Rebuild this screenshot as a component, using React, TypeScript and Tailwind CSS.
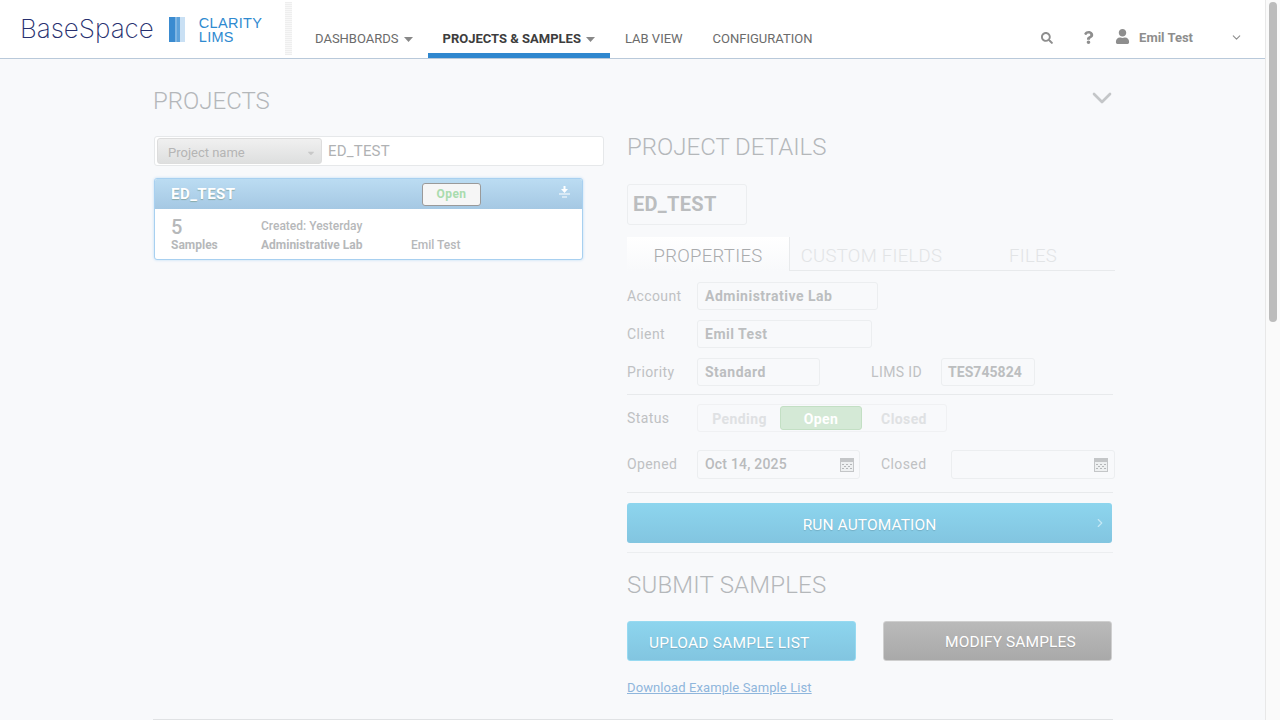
import React from "react";
import { FaSearch, FaQuestion, FaUser, FaCaretDown } from "react-icons/fa";
import { ChevronDown, ChevronRight } from "lucide-react";

const din = "font-['Roboto',sans-serif]";

const Caret = () => (
  <svg width="9" height="5" viewBox="0 0 9 5" className="text-[#888]">
    <path d="M0 0h9L4.5 5z" fill="currentColor" />
  </svg>
);

const NavItem = ({ label, active, caret }: { label: string; active?: boolean; caret?: boolean }) => (
  <div
    className={`flex h-[58px] items-center gap-[5px] px-[15px] pt-[25px] text-[13px] ${
      active ? "border-b-[5px] border-[#2f87cf] font-bold text-[#3d3d3d]" : "pb-[5px] text-[#6b6b6b]"
    }`}
  >
    {label}
    {caret && <Caret />}
  </div>
);

const CalendarIcon = () => (
  <svg width="14" height="14" viewBox="0 0 14 14">
    <rect width="14" height="14" fill="#c4c6c8" />
    <rect x="1" y="4" width="12" height="9" fill="#eef0f1" />
    <path d="M2 6h2v1H2zM6 6h2v1H6zM10 6h2v1h-2zM4 8h2v1H4zM8 8h2v1H8zM2 10h2v1H2zM6 10h2v1H6zM10 10h2v1h-2z" fill="#b5b7b9" />
  </svg>
);

const Field = ({ value, width, tight }: { value: string; width: string; tight?: boolean }) => (
  <div
    className={`flex h-[28px] items-center rounded-[3px] border border-[#eceef0] text-[14px] font-bold text-[#bcbec0] ${width} ${
      tight ? "pl-[6px] tracking-[0.05px]" : "pl-[7px] tracking-[0.5px]"
    }`}
  >
    {value}
  </div>
);

const Label = ({ children, width }: { children: React.ReactNode; width: string }) => (
  <div className={`shrink-0 text-[14px] tracking-[0.4px] text-[#bfc1c3] ${width}`}>{children}</div>
);

export default function App() {
  return (
    <div className={`flex h-[720px] w-[1280px] overflow-hidden bg-[#f8f9fb] ${din}`}>
      <div className="w-[1265px]">
        <header className="flex h-[59px] border-b border-[#b9c9da] bg-white">
          <div className="flex w-[300px] items-start">
            <div className="mt-[14px] ml-[20px] font-['Inter',sans-serif] text-[26px] leading-[30px] font-extralight text-[#27306f]">
              BaseSpace
            </div>
            <div className="mt-[17px] ml-[15px] flex h-[25px] w-[16px]">
              <div className="w-[6px] bg-[#3a8bd0]" />
              <div className="w-[2px] bg-[#7fb5e3]" />
              <div className="w-[3px] bg-[#5ea2da]" />
              <div className="w-[5px] bg-[#c9e0f4]" />
            </div>
            <div className="mt-[16px] ml-[14px] font-['Liberation_Sans',sans-serif] text-[14.5px] leading-[14px] tracking-[0.3px] text-[#2f8ad0]">
              CLARITY
              <br />
              LIMS
            </div>
            <div className="mt-[2px] mr-[8px] ml-auto h-[53px] w-[7px] bg-[repeating-linear-gradient(to_bottom,#eeeeee_0px,#eeeeee_1px,#f8f8f8_1px,#f8f8f8_2px)]" />
          </div>
          <nav className="flex">
            <NavItem label="DASHBOARDS" caret />
            <NavItem label="PROJECTS & SAMPLES" caret active />
            <NavItem label="LAB VIEW" />
            <NavItem label="CONFIGURATION" />
          </nav>
          <div className="ml-auto flex items-center pt-[17px] text-[#8e8e8e]">
            <FaSearch size={12} />
            <FaQuestion size={13} className="ml-[29px]" />
            <FaUser size={15} className="ml-[20px] -translate-y-[1px]" />
            <span className="ml-[9px] text-[13px] font-bold">Emil Test</span>
            <ChevronDown size={13} className="mr-[22px] ml-[37px]" />
          </div>
        </header>

        <main className="ml-[153px] w-[960px]">
          <div className="flex h-[77px] items-start justify-between">
            <h1 className="mt-[27px] text-[24px] leading-[30px] font-light text-[#b4b7ba]">PROJECTS</h1>
            <ChevronDown size={32} strokeWidth={2} className="mt-[23px] -mr-[5px] text-[#c4c6c8]" />
          </div>

          <div className="flex">
            <div className="w-[474px] pl-[1px]">
              <div className="flex h-[30px] w-[450px] items-center rounded-[3px] border border-[#e6e8ea] bg-white pl-[2px]">
                <div className="flex h-[26px] w-[165px] items-center justify-between rounded-[3px] border border-[#dddddd] bg-linear-to-b from-[#f0f0f0] to-[#dedfdf] pt-[3px] pr-[5px] pl-[10px] text-[13px] text-[#b5b5b5]">
                  Project name
                  <FaCaretDown size={10} className="text-[#c8c8c8]" />
                </div>
                <span className="ml-[6px] text-[15px] tracking-[0.2px] text-[#b0b2b4]">ED_TEST</span>
              </div>

              <div className="mt-[12px] h-[82px] w-[429px] overflow-hidden rounded-[3px] border border-[#a8d0f0] bg-white shadow-[0_0_3px_#bcdcf5]">
                <div className="flex h-[30px] items-center bg-linear-to-b from-[#bbdcf2] to-[#a5c8e3] pr-[12px] pl-[16px]">
                  <span className="w-[250px] text-[15px] font-bold tracking-[0.5px] text-white [text-shadow:0_1px_1px_#8aa]">ED_TEST</span>
                  <span className="ml-[1px] flex h-[23px] w-[59px] items-center justify-center rounded-[3px] border border-[#9a9a9a] bg-[#f6f6f6] text-[12px] font-bold tracking-[0.4px] text-[#a9dcae]">
                    Open
                  </span>
                  <svg width="11" height="12" viewBox="0 0 11 12" className="mb-[5px] ml-auto">
                    <path d="M4.5 0h2v3H9L5.5 7 2 3h2.5zM0 7.5h11v1H0zM3 10.5h5v1H3z" fill="#fff" />
                  </svg>
                </div>
                <div className="flex pt-[7px] pl-[16px] text-[#b6b8ba]">
                  <div className="w-[90px]">
                    <div className="text-[20px] leading-[22px] font-medium">5</div>
                    <div className="text-[12px] leading-[14px] font-bold">Samples</div>
                  </div>
                  <div className="w-[150px] pt-[3px] text-[12px] leading-[14px]">
                    <div className="font-medium">Created: Yesterday</div>
                    <div className="mt-[5px] font-bold">Administrative Lab</div>
                  </div>
                  <div className="pt-[22px] text-[12px] leading-[14px] font-medium">Emil Test</div>
                </div>
              </div>
            </div>

            <div className="-mt-[5px] w-[486px]">
              <h2 className="text-[24px] leading-[32px] font-light text-[#b4b7ba]">PROJECT DETAILS</h2>
              <div className="mt-[21px] flex h-[41px] w-[120px] items-center rounded-[3px] border border-[#eceef0] pb-[1px] pl-[5px] text-[20px] font-bold tracking-[0.3px] text-[#bbbdbf]">
                ED_TEST
              </div>

              <div className="mt-[12px] flex h-[34px] w-[488px] border-b border-[#e8eaec] text-[18.5px] font-light tracking-[0.3px]">
                <div className="flex h-[34px] w-[163px] items-center justify-center border-r border-[#e8eaec] bg-linear-to-b from-white to-[#f8f9fb] pt-[6px] text-[#a9abad]">
                  PROPERTIES
                </div>
                <div className="flex w-[163px] items-center justify-center pt-[6px] text-[#e2e4e6]">CUSTOM FIELDS</div>
                <div className="flex w-[160px] items-center justify-center pt-[6px] text-[#e2e4e6]">FILES</div>
              </div>

              <div className="mt-[11px] flex items-center">
                <Label width="w-[70px]">Account</Label>
                <Field value="Administrative Lab" width="w-[181px]" />
              </div>
              <div className="mt-[10px] flex items-center">
                <Label width="w-[70px]">Client</Label>
                <Field value="Emil Test" width="w-[175px]" />
              </div>
              <div className="mt-[10px] flex items-center">
                <Label width="w-[70px]">Priority</Label>
                <Field value="Standard" width="w-[123px]" />
                <Label width="w-[70px] ml-[51px]">LIMS ID</Label>
                <Field value="TES745824" width="w-[94px]" tight />
              </div>

              <div className="mt-[8px] border-t border-[#e8eaec]" />

              <div className="mt-[9px] flex items-center">
                <Label width="w-[70px]">Status</Label>
                <div className="flex h-[28px] w-[250px] items-center rounded-[3px] border border-[#f0f1f3] pl-[1px] text-[14px] font-bold tracking-[0.4px] text-[#dfe1e3]">
                  <span className="w-[81px] pt-[2px] text-center">Pending</span>
                  <span className="flex h-[24px] w-[82px] items-center justify-center rounded-[3px] border border-[#c3dfc4] bg-[#d4e9d6] pt-[2px] text-white">Open</span>
                  <span className="w-[84px] pt-[2px] text-center">Closed</span>
                </div>
              </div>

              <div className="mt-[18px] flex w-[490px] items-center">
                <Label width="w-[70px]">Opened</Label>
                <div className="flex h-[29px] w-[163px] items-center justify-between rounded-[3px] border border-[#eceef0] pr-[5px] pl-[7px] text-[14px] font-medium tracking-[0.2px] text-[#b9bbbd]">
                  Oct 14, 2025
                  <CalendarIcon />
                </div>
                <Label width="w-[70px] ml-[21px]">Closed</Label>
                <div className="flex h-[29px] w-[164px] items-center justify-end rounded-[3px] border border-[#eceef0] pr-[6px]">
                  <CalendarIcon />
                </div>
              </div>

              <div className="mt-[13px] border-t border-[#e8eaec]" />

              <div className="relative mt-[10px] flex h-[40px] w-[485px] items-center justify-center rounded-[3px] bg-linear-to-b from-[#8dd5ee] to-[#82c5e0] pt-[5px] text-[15.5px] tracking-[0.1px] text-white [text-shadow:0_1px_1px_rgba(0,0,0,0.15)]">
                RUN AUTOMATION
                <ChevronRight size={14} className="absolute top-[13px] right-[5px] text-[#c5e8f5]" />
              </div>

              <div className="mt-[9px] border-t border-[#eceef0]" />

              <h2 className="mt-[16px] text-[24px] leading-[32px] font-light tracking-[0.2px] text-[#b4b7ba]">SUBMIT SAMPLES</h2>

              <div className="mt-[20px] flex w-[485px] justify-between">
                <div className="flex h-[40px] w-[229px] items-center rounded-[3px] border border-[#97daf1] bg-linear-to-b from-[#8dd5ee] to-[#82c5e0] pt-[5px] pl-[21px] text-[15.5px] tracking-[0.2px] text-white [text-shadow:0_1px_1px_rgba(0,0,0,0.15)]">
                  UPLOAD SAMPLE LIST
                </div>
                <div className="flex h-[40px] w-[229px] items-center rounded-[3px] border border-[#cfcfcf] bg-linear-to-b from-[#bababa] to-[#a9a9a9] pt-[3px] pl-[61px] text-[15.5px] tracking-[0.1px] text-white [text-shadow:0_1px_1px_rgba(0,0,0,0.1)]">
                  MODIFY SAMPLES
                </div>
              </div>

              <div className="mt-[17px] text-[13px] leading-[20px] tracking-[0.1px] text-[#8fb6dc] underline">Download Example Sample List</div>
            </div>
          </div>

          <div className="mt-[21px] border-t border-[#e0e2e4]" />
        </main>
      </div>

      <div className="h-full w-[15px] border-l border-[#e8e8e8] bg-[#fafafa] pt-[2px] pl-[3px]">
        <div className="h-[320px] w-[8px] rounded-[4px] bg-[#bcbcbc]" />
      </div>
    </div>
  );
}
